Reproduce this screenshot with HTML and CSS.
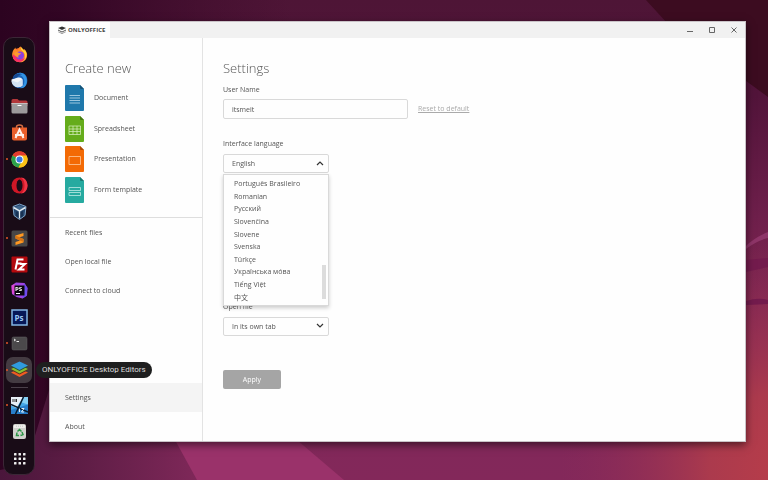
FILE: index.html
```html
<!DOCTYPE html>
<html lang="en">
<head>
<meta charset="utf-8">
<meta name="viewport" content="width=device-width, initial-scale=1">
<title>ONLYOFFICE Desktop Editors</title>
<link rel="stylesheet" href="styles.css">
</head>
<body>
<svg class="wallpaper" viewBox="0 0 768 480" preserveAspectRatio="none" aria-hidden="true">
  <defs>
    <linearGradient id="wall" x1="0" y1="0" x2="0" y2="1">
      <stop offset="0" stop-color="#4e1536"/><stop offset=".2" stop-color="#52143a"/><stop offset=".45" stop-color="#6e1f4b"/><stop offset=".7" stop-color="#862953"/><stop offset=".92" stop-color="#82285a"/><stop offset="1" stop-color="#83285a"/>
    </linearGradient>
    <linearGradient id="shade"><stop offset="0" stop-color="#2c0320"/><stop offset=".08" stop-color="#2f0422" stop-opacity=".9"/><stop offset=".38" stop-color="#3a0928" stop-opacity="0"/></linearGradient>
    <linearGradient id="low"><stop offset="0" stop-color="#4a163b"/><stop offset=".1" stop-color="#5d1d45"/><stop offset=".26" stop-color="#7f2859"/><stop offset=".5" stop-color="#83285a" stop-opacity="0"/></linearGradient>
    <radialGradient id="warm" gradientUnits="userSpaceOnUse" cx="790" cy="470" r="230"><stop offset="0" stop-color="#b93d49"/><stop offset=".35" stop-color="#ab3a4d"/><stop offset="1" stop-color="#8a2b58" stop-opacity="0"/></radialGradient>
  </defs>
  <rect width="768" height="480" fill="url(#wall)"/>
  <rect width="768" height="480" fill="url(#shade)"/>
  <path d="M646 0h122v97L742 78 690 48z" fill="#3c0c20"/>
  <path d="M49 390v40h719v50H0v-10l26-5z" fill="url(#low)"/>
  <path d="M175 440h122l47 40H197z" fill="#9a326a"/>
  <rect x="500" y="200" width="268" height="280" fill="url(#warm)"/>
  <path d="M746 246q8-8 22-14v6q-12 3-22 11z" fill="#8e3568"/>
  <path d="M746 260l22-2v9l-22 5zM746 301q12-4 22-1v4l-22 1z" fill="#731b4d"/>
</svg>

<div class="desktop">
  <nav class="dock" aria-label="Dock">
    <button class="app" aria-label="Firefox"><svg viewBox="0 0 34 34"><circle cx="17" cy="18" r="14" fill="#ff6b2c"/><path d="M3 20C1 12 6 6 9 3c0 4 2 5 5 6 0-4 2-7 6-8 0 4 4 5 7 9 0-2-1-3-1-4 5 4 7 9 6 15C30 30 22 34 15 32 8 31 4 26 3 20z" fill="#ff8a28"/><path d="M26 6c5 5 6 10 4 17-2 6-8 10-14 9 8-2 13-7 12-14-1-5-5-7-8-11V2c2 2 4 5 7 8z" fill="#ffd43a"/><path d="M4 17c-2 8 4 15 12 15 7 0 11-4 12-9-5 5-11 4-14 0z" fill="#f92e67"/><circle cx="18" cy="19" r="8" fill="#8b3ee0"/><path d="M7 13c4-2 7-1 9 1l5 1c-2 2-5 2-6 4-1 1-1 3 1 4-5 0-9-4-9-10z" fill="#ff9a30"/></svg></button>
    <button class="app" aria-label="Thunderbird"><svg viewBox="0 0 34 34"><path d="M6 7C12 0 24 0 29 6c5 6 5 17-1 23-5 5-13 4-18 2C3 28-1 18 6 7z" fill="#1c63b7"/><path d="M12 3c7-3 14-1 18 6 3 7 2 15-2 20-2 2-5 3-8 3 7-6 9-15 4-21-3-4-7-6-12-5z" fill="#3294e4"/><path d="M1 15l13-4c5-1 9 1 9 6v10c-3 3-8 4-12 3C5 27 1 22 1 15z" fill="#f0f4f9"/><path d="M1 17l12 4 10-7v13c-9 7-22 2-22-10z" fill="#d3e2f3"/><path d="M8 6c4-4 11-4 14-1-4 0-7 1-9 5l-9 4c0-3 1-6 4-8z" fill="#174a91"/></svg></button>
    <button class="app" aria-label="Files"><svg viewBox="0 0 34 34"><path d="M1 5q0-3 3-3h9l3 3h14q3 0 3 3v8H1z" fill="#b2373a"/><path d="M1 10h32v18q0 3-3 3H4q-3 0-3-3z" fill="#9c9a9b"/><path d="M1 10h32v2H1z" fill="#c5bdbd"/><path d="M13 15h8" stroke="#fff" stroke-width="2"/></svg></button>
    <button class="app" aria-label="Ubuntu Software"><svg viewBox="0 0 34 34"><path d="M11 9V6q0-4 6-4t6 4v3" fill="none" stroke="#d56f43" stroke-width="3"/><path d="M2 7h30v22q0 4-4 4H6q-4 0-4-4z" fill="#e95f2b"/><path d="M9 28 17 11l8 17M8 22h18" fill="none" stroke="#fff2eb" stroke-width="4"/></svg></button>
    <button class="app running" aria-label="Google Chrome"><svg viewBox="0 0 34 34"><circle cx="17" cy="17" r="16" fill="#fbc116"/><path d="M17 17 3 9a16 16 0 0 1 28 0z" fill="#e33b2e"/><path d="M3 9a16 16 0 0 0 12 24l7-12-5-4z" fill="#2ba24c"/><path d="M17 9h14a16 16 0 0 1-16 24l8-13z" fill="#fbc116"/><circle cx="17" cy="17" r="8" fill="#fff"/><circle cx="17" cy="17" r="6" fill="#3779e4"/></svg></button>
    <button class="app" aria-label="Opera"><svg viewBox="0 0 34 34"><ellipse cx="17" cy="17" rx="16" ry="16" fill="#cf1726"/><path d="M20 1c7 0 13 7 13 16s-6 16-13 16c5-3 7-9 7-16S25 4 20 1z" fill="#ef3545"/><ellipse cx="17" cy="17" rx="6" ry="12" fill="#190c17"/></svg></button>
    <button class="app" aria-label="VirtualBox"><svg viewBox="0 0 34 34"><path d="M4 7 17 2l13 5-2 18-11 8-11-8z" fill="#24456d" stroke="#7fa5c8" stroke-width="2"/><path d="M6 9 17 14l11-5-11-4z" fill="#40678d"/><path d="M5 9l12 7 12-7M17 16v15" fill="none" stroke="#e1ebf1" stroke-width="3"/><path d="M10 17v9l5 4V19zM24 16v10l-5 4V19z" fill="#183253"/></svg></button>
    <button class="app running" aria-label="Sublime Text"><svg viewBox="0 0 34 34"><rect x="1" y="1" width="32" height="32" rx="3" fill="#484747"/><path d="M25 6v6l-9 3 9 3v7L9 30v-6l9-3-9-4v-6z" fill="#ff9821"/><path d="M9 11v6l16 7v-6z" fill="#d77414"/></svg></button>
    <button class="app" aria-label="FileZilla"><svg viewBox="0 0 34 34"><rect x="1" y="1" width="32" height="32" rx="2" fill="#b4090d"/><path d="M9 27 13 7h12M12 15h9M18 16h10L16 27h11" fill="none" stroke="#fff" stroke-width="4"/></svg></button>
    <button class="app" aria-label="PhpStorm"><svg viewBox="0 0 34 34"><path d="M1 7 10 1l17 1 6 10-1 15-9 6-12-3-9-6z" fill="#a144e2"/><path d="M1 7 8 4l-1 22-5-4z" fill="#dd48d3"/><path d="M26 2l7 10-2 16-8 5z" fill="#6c4bf0"/><rect x="7" y="7" width="20" height="20" fill="#09070c"/><text x="8" y="18" class="php-mark">PS</text><path d="M10 23h8" stroke="#fff" stroke-width="2"/></svg></button>
    <button class="app" aria-label="Photoshop"><svg viewBox="0 0 34 34"><rect x="2" y="2" width="30" height="30" fill="#071858" stroke="#83b5e5" stroke-width="3"/><text x="7" y="23" class="ps-mark">Ps</text></svg></button>
    <button class="app running" aria-label="Terminal"><svg viewBox="0 0 34 34"><rect x="2" y="4" width="30" height="26" rx="3" fill="#4b494b" stroke="#656365"/><path d="m6 8 3 2-3 2M11 13h5" fill="none" stroke="#eee" stroke-width="2"/></svg></button>
    <button class="app running current" aria-label="ONLYOFFICE" aria-describedby="app-tip"><svg viewBox="0 0 34 34"><path d="m0 23 17-8 17 8-17 9z" fill="#f15b22"/><path d="m0 18 17-8 17 8-17 9z" fill="#55301d"/><path d="m0 16 17-8 17 8-17 9z" fill="#87bf31"/><path d="m0 11 17-8 17 8-17 9z" fill="#26513d"/><path d="m0 9 17-8 17 8-17 9z" fill="#309bdf"/></svg><span class="tooltip" id="app-tip" role="tooltip">ONLYOFFICE Desktop Editors</span></button>
    <hr class="divider">
    <button class="app running" aria-label="Screen tool"><svg viewBox="0 0 34 34"><rect width="34" height="34" rx="2" fill="#45a7e6"/><path d="M0 0h24L11 22 0 17z" fill="#e7eff6"/><path d="M24 0h10v15L19 10z" fill="#86d1f5"/><path d="M0 26 34 15v19H0z" fill="#297eca"/><path d="M25 0 9 34M0 15l34 15" stroke="#071929" stroke-width="3"/><path d="M4 4v6m4-6v6m3-6v6" stroke="#333" stroke-width="2"/><path d="M17 23v7m4-7h5l-5 7h5" fill="none" stroke="#e2f3ff" stroke-width="2"/></svg></button>
    <button class="app" aria-label="Trash"><svg viewBox="0 0 34 34"><rect x="4" y="2" width="26" height="30" rx="4" fill="#d0d0cc"/><path d="M6 4h22v6H6z" fill="#eeeeeb"/><path d="M11 5v3m4-3v3m4-3v3m4-3v3" stroke="#b9b9b5"/><path d="m13 17 4-4 4 4M22 18l2 5-5 2M16 25h-5l1-6" fill="none" stroke="#299444" stroke-width="3"/></svg></button>
    <button class="app" aria-label="Show applications"><svg viewBox="0 0 34 34" fill="#eee"><rect x="6" y="6" width="5" height="5" rx="1"/><rect x="15" y="6" width="5" height="5" rx="1"/><rect x="24" y="6" width="5" height="5" rx="1"/><rect x="6" y="15" width="5" height="5" rx="1"/><rect x="15" y="15" width="5" height="5" rx="1"/><rect x="24" y="15" width="5" height="5" rx="1"/><rect x="6" y="24" width="5" height="5" rx="1"/><rect x="15" y="24" width="5" height="5" rx="1"/><rect x="24" y="24" width="5" height="5" rx="1"/></svg></button>
  </nav>

  <div class="window">
    <header class="titlebar">
      <button class="tab"><svg viewBox="0 0 16 16"><path d="m0 4 8-3 8 3-8 4z" fill="#333"/><path d="m0 7 8 4 8-4v2l-8 4-8-4z" fill="#555"/><path d="m0 11 8 3 8-3v1l-8 4-8-4z" fill="#888"/></svg>ONLYOFFICE</button>
      <div class="controls">
        <button aria-label="Minimize"><svg viewBox="0 0 8 8"><path d="M1 5.5h6"/></svg></button>
        <button aria-label="Maximize"><svg viewBox="0 0 8 8"><path d="M1.5 1.5h5v5h-5z"/></svg></button>
        <button aria-label="Close"><svg viewBox="0 0 8 8"><path d="m1.5 1.5 5 5m0-5-5 5"/></svg></button>
      </div>
    </header>
    <div class="content">
      <aside class="sidebar">
        <section class="create">
          <h2>Create new</h2>
          <div class="doc-list">
            <button class="doc"><svg viewBox="0 0 38 52"><path d="M2 0h28l8 8v42q0 2-2 2H2q-2 0-2-2V2q0-2 2-2z" fill="#1f78ab"/><path d="m30 0 8 8h-6q-2 0-2-2z" fill="#155377"/><path d="M9 21h21M9 26h21M9 31h21M9 36h21" stroke="#c4e0f0" stroke-width="1.5"/></svg>Document</button>
            <button class="doc"><svg viewBox="0 0 38 52"><path d="M2 0h28l8 8v42q0 2-2 2H2q-2 0-2-2V2q0-2 2-2z" fill="#65ac1b"/><path d="m30 0 8 8h-6q-2 0-2-2z" fill="#457810"/><path d="M8 20h23v17H8zM8 26h23M8 31h23M16 20v17M24 20v17" fill="none" stroke="#d5edbd" stroke-width="1.5"/></svg>Spreadsheet</button>
            <button class="doc"><svg viewBox="0 0 38 52"><path d="M2 0h28l8 8v42q0 2-2 2H2q-2 0-2-2V2q0-2 2-2z" fill="#f36a05"/><path d="m30 0 8 8h-6q-2 0-2-2z" fill="#a84b07"/><path d="M8 21h23v16H8z" fill="none" stroke="#ffd0a6" stroke-width="1.5"/></svg>Presentation</button>
            <button class="doc"><svg viewBox="0 0 38 52"><path d="M2 0h28l8 8v42q0 2-2 2H2q-2 0-2-2V2q0-2 2-2z" fill="#26aaa0"/><path d="m30 0 8 8h-6q-2 0-2-2z" fill="#177870"/><path d="M8 21h23v6H8zM8 31h23v6H8z" fill="none" stroke="#c5eee9" stroke-width="1.5"/></svg>Form template</button>
          </div>
        </section>
        <nav class="places" aria-label="Sections">
          <a href="#recent">Recent files</a>
          <a href="#open">Open local file</a>
          <a href="#cloud">Connect to cloud</a>
          <a class="selected" href="#settings" aria-current="page">Settings</a>
          <a href="#about">About</a>
        </nav>
      </aside>
      <main class="settings">
        <h2>Settings</h2>
        <div class="field user">
          <label for="user">User Name</label>
          <div class="line"><input id="user" type="text" value="itsmeit"><a href="#reset">Reset to default</a></div>
        </div>
        <div class="field language">
          <label for="language">Interface language</label>
          <div class="picker">
            <select id="language"><option>English</option></select>
            <svg class="chevron" viewBox="0 0 8 8" aria-hidden="true"><path d="m1 6 3-3 3 3"/></svg>
            <ul class="menu" role="listbox" aria-label="Interface language">
              <li role="option">Português Brasileiro</li>
              <li role="option">Romanian</li>
              <li role="option">Русский</li>
              <li role="option">Slovenčina</li>
              <li role="option">Slovene</li>
              <li role="option">Svenska</li>
              <li role="option">Türkçe</li>
              <li role="option">Українська мóва</li>
              <li role="option">Tiếng Việt</li>
              <li role="option" lang="zh">中文</li>
            </ul>
          </div>
        </div>
        <div class="field open-file">
          <label for="open-file">Open file</label>
          <div class="picker">
            <select id="open-file"><option>In its own tab</option></select>
            <svg class="chevron" viewBox="0 0 8 8" aria-hidden="true"><path d="m1 2 3 3 3-3"/></svg>
          </div>
        </div>
        <button class="apply">Apply</button>
      </main>
    </div>
  </div>
</div>
</body>
</html>
```
FILE: styles.css
```css
* {
  box-sizing: border-box;
}

body {
  margin: 0;
  background: #4e1536;
  color: #555;
  font: 7px/10px "Open Sans", "Noto Sans", "Noto Sans CJK SC", sans-serif;
}

button,
input,
select {
  margin: 0;
  padding: 0;
  border: 0;
  background: none;
  color: inherit;
  font: inherit;
}

a {
  color: inherit;
  text-decoration: none;
}

.wallpaper {
  position: fixed;
  inset: 0;
  z-index: -1;
  width: 100%;
  height: 100%;
}

.desktop {
  display: flex;
  gap: 14px;
  min-height: 100vh;
  padding: 21px 22px 5px 3px;
}

/* Dock */
.dock {
  display: flex;
  flex: none;
  flex-direction: column;
  justify-content: space-between;
  width: 32px;
  margin-top: 16px;
  padding: 3px 2px;
  border: 1px solid #3b2736;
  border-radius: 10px;
  background: #190c17;
}

.app {
  position: relative;
  display: flex;
  align-items: center;
  justify-content: center;
  height: 26px;
  border-radius: 7px;
}

.app > svg {
  width: 17px;
  height: 17px;
}

.current {
  background: #443b42;
}

.running::before {
  content: "";
  position: absolute;
  left: 0;
  width: 2px;
  height: 2px;
  border-radius: 50%;
  background: #e2532a;
}

.divider {
  width: 17px;
  margin: 4px auto;
  border: 0;
  border-top: 1px solid #4b404a;
}

.php-mark {
  fill: #fff;
  font: bold 12px "Open Sans", sans-serif;
}

.ps-mark {
  fill: #9bcaf5;
  font: bold 16px "Open Sans", sans-serif;
}

.tooltip {
  position: absolute;
  left: 30px;
  z-index: 5;
  padding: 3px 6px;
  border-radius: 8px;
  background: #1e1f1f;
  color: #dedede;
  font-family: Roboto, "Open Sans", sans-serif;
  font-size: 8px;
  white-space: nowrap;
}

/* Window */
.window {
  display: flex;
  flex: 1;
  flex-direction: column;
  min-width: 0;
  margin-bottom: 33px;
  border: 1px solid #c9c3c7;
  background: #fefefe;
  box-shadow: 0 3px 8px #0008;
}

.titlebar {
  display: flex;
  justify-content: space-between;
  height: 16px;
  background: #f1f1f1;
}

.tab {
  display: flex;
  align-items: center;
  gap: 2px;
  padding: 0 5px 0 8px;
  background: #fefefe;
  color: #444;
  font-size: 6px;
  font-weight: 700;
}

.tab svg {
  width: 8px;
  height: 8px;
}

.controls {
  display: flex;
  align-items: center;
  gap: 14px;
  padding-right: 7px;
}

.controls button {
  display: flex;
}

.controls svg {
  width: 8px;
  height: 8px;
  fill: none;
  stroke: #666;
}

.content {
  display: flex;
  flex: 1;
}

h2 {
  margin: 0;
  color: #555;
  font-size: 13px;
  font-weight: 300;
  line-height: 18px;
}

/* Sidebar */
.sidebar {
  display: flex;
  flex: none;
  flex-direction: column;
  width: 153px;
  border-right: 1px solid #e3e3e3;
}

.create {
  padding: 21px 15px 12px;
  border-bottom: 1px solid #dedede;
}

.doc-list {
  display: grid;
  grid-auto-rows: 1fr;
  height: 122px;
  margin-top: 6px;
}

.doc {
  display: flex;
  align-items: center;
  gap: 10px;
}

.doc svg {
  width: 19px;
  height: 26px;
}

.places {
  display: flex;
  flex: 1;
  flex-direction: column;
}

.places a {
  padding: 10px 15px 9px;
}

.places .selected {
  margin-top: auto;
  background: #f4f4f4;
}

/* Settings */
.settings {
  flex: 1;
  min-width: 0;
  padding: 21px 20px;
}

.field label {
  display: block;
}

.user {
  margin-top: 8px;
}

.line {
  display: flex;
  align-items: center;
  gap: 10px;
  margin-top: 4px;
}

.line input {
  width: 185px;
  height: 20px;
  padding: 0 8px;
  border: 1px solid #d9d9d9;
  border-radius: 2px;
}

.line a {
  color: #aaa;
  text-decoration: underline;
}

.language {
  margin-top: 20px;
}

.picker {
  position: relative;
  width: 106px;
  margin-top: 5px;
}

.picker select {
  display: block;
  width: 100%;
  height: 19px;
  padding: 0 8px;
  border: 1px solid #d9d9d9;
  border-radius: 2px;
  background: #fefefe;
  appearance: none;
}

.chevron {
  position: absolute;
  top: 5px;
  right: 5px;
  width: 8px;
  height: 8px;
  fill: none;
  stroke: #333;
  stroke-width: 1.2;
}

.menu {
  position: absolute;
  top: 20px;
  left: 0;
  z-index: 2;
  display: grid;
  grid-auto-rows: 1fr;
  width: 100%;
  height: 132px;
  margin: 0;
  padding: 3px 10px 1px;
  border: 1px solid #d9d9d9;
  background: #fefefe;
  box-shadow: 0 2px 4px #0003;
  list-style: none;
}

.menu::after {
  content: "";
  position: absolute;
  right: 2px;
  bottom: 6px;
  width: 4px;
  height: 34px;
  background: #dcdcdc;
}

.menu li {
  display: flex;
  align-items: center;
}

.open-file {
  margin-top: 129px;
}

.apply {
  display: block;
  width: 58px;
  height: 19px;
  margin-top: 34px;
  border-radius: 2px;
  background: #a5a5a5;
  color: #fff;
}
```
